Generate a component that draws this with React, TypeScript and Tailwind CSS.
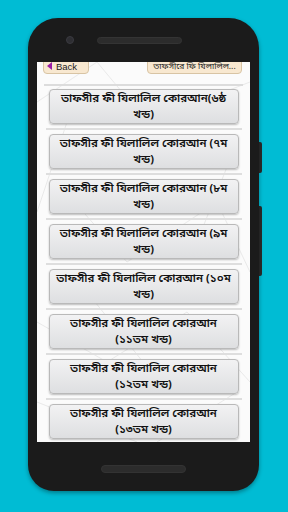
import React from "react";

const items: [string, string][] = [
  ["তাফসীর ফী যিলালিল কোরআন(৬ষ্ঠ", "খন্ড)"],
  ["তাফসীর ফী যিলালিল কোরআন (৭ম", "খন্ড)"],
  ["তাফসীর ফী যিলালিল কোরআন (৮ম", "খন্ড)"],
  ["তাফসীর ফী যিলালিল কোরআন (৯ম", "খন্ড)"],
  ["তাফসীর ফী যিলালিল কোরআন (১০ম", "খন্ড)"],
  ["তাফসীর ফী যিলালিল কোরআন", "(১১তম খন্ড)"],
  ["তাফসীর ফী যিলালিল কোরআন", "(১২তম খন্ড)"],
  ["তাফসীর ফী যিলালিল কোরআন", "(১৩তম খন্ড)"],
];

const font = { fontFamily: '"Noto Sans Bengali", "Noto Sans", "Liberation Sans", sans-serif' };

function Pattern() {
  const lines: [number, number, number, number][] = [
    [0, 40, 60, 0], [60, 0, 110, 60], [110, 60, 213, 20], [20, 120, 90, 200],
    [90, 200, 180, 140], [180, 140, 213, 210], [0, 260, 70, 300], [70, 300, 150, 250],
    [150, 250, 213, 320], [0, 340, 100, 380], [120, 380, 200, 330], [30, 60, 0, 150],
    [200, 80, 160, 180], [50, 230, 130, 330],
  ];
  return (
    <svg className="absolute inset-0 w-full h-full" viewBox="0 0 213 380" preserveAspectRatio="none">
      {lines.map((l, i) => (
        <line key={i} x1={l[0]} y1={l[1]} x2={l[2]} y2={l[3]} stroke="#e4e4e4" strokeWidth="0.8" />
      ))}
    </svg>
  );
}

export default function App() {
  return (
    <div className="w-[288px] h-[512px] bg-[#00bcd4] overflow-hidden pt-[18px] pl-[28px]" style={font}>
      <div className="relative w-[231px] h-[473px]">
        {/* side buttons */}
        <div className="absolute right-[-3px] top-[124px] w-[4px] h-[31px] bg-[#2a2a2a] rounded-r-[2px]" />
        <div className="absolute right-[-3px] top-[188px] w-[4px] h-[70px] bg-[#2a2a2a] rounded-r-[2px]" />
        <div className="relative w-full h-full bg-[#1b1b1b] rounded-t-[30px] rounded-b-[26px] shadow-[0_2px_4px_rgba(0,0,0,0.35)] flex flex-col items-center">
          {/* top bezel */}
          <div className="h-[44px] w-full flex items-center pl-[38px] gap-[23px]">
            <div className="w-[8px] h-[8px] rounded-full bg-[#2e2e32] border border-[#3a3a40]" />
            <div className="w-[85px] h-[7px] rounded-full bg-[#2c2c2c] border border-[#343434]" />
          </div>
          {/* screen */}
          <div className="relative w-[213px] h-[380px] bg-[#fbfbfb] overflow-hidden">
            <Pattern />
            <div className="relative flex flex-col items-center">
              <div className="w-full flex justify-between items-end pl-[6px] pr-[8px] mt-[-4px] h-[16px]">
                <div className="h-[16px] w-[46px] bg-[#f8e8d0] border border-[#d8c4a4] rounded-b-[4px] flex items-end gap-[4px] pl-[3px] pb-[1px] text-[9.5px] leading-[11px] text-[#222]" style={{ fontFamily: '"Liberation Sans", sans-serif' }}>
                  <span className="w-0 h-0 border-y-[4px] border-y-transparent border-r-[5px] border-r-[#9b1ea6] mb-[2px]" />
                  <span>Back</span>
                </div>
                <div className="h-[16px] w-[95px] bg-[#f8e8d0] border border-[#d8c4a4] rounded-b-[4px] text-[8.5px] leading-[11px] text-[#222] flex items-end justify-center pb-[1px] whitespace-nowrap">
                  তাফসীরে ফি যিলালিল...
                </div>
              </div>
              <div className="w-[199px] h-[2px] bg-[#dcdcdc] mt-[10px]" />
              <div className="flex flex-col items-center mt-[3px]">
                {items.map((t, i) => (
                  <div key={i} className="flex flex-col items-center">
                    <div className="w-[190px] h-[35px] rounded-[4px] border border-[#b9b9b9] bg-gradient-to-b from-[#f2f2f3] to-[#dedfe1] shadow-[0_1px_2px_rgba(0,0,0,0.25)] flex flex-col items-center justify-center text-center text-[11.5px] leading-[16px] font-semibold text-[#111] whitespace-nowrap">
                      <span>{t[0]}</span>
                      <span>{t[1]}</span>
                    </div>
                    <div className="w-[196px] h-[2px] bg-[#dedede] my-[4px]" />
                  </div>
                ))}
              </div>
            </div>
          </div>
          {/* bottom bezel */}
          <div className="flex-1 w-full flex items-center justify-center">
            <div className="w-[85px] h-[8px] rounded-full bg-[#2c2c2c] border border-[#333] mt-[5px]" />
          </div>
        </div>
      </div>
    </div>
  );
}
